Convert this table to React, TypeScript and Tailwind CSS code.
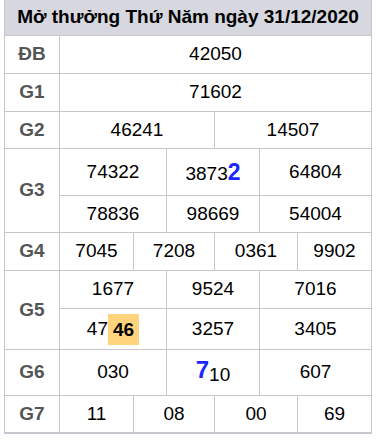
const B = 'border-[#c6c6ce]';

function Cell({ w, children, last }: { w: string; children: React.ReactNode; last?: boolean }) {
  return (
    <div className={`${w} flex items-center justify-center ${last ? '' : `border-r ${B}`}`}>
      {children}
    </div>
  );
}

function Row({
  label,
  rows,
}: {
  label: string;
  rows: { h: string; cells: { w: string; v: React.ReactNode }[] }[];
}) {
  return (
    <div className={`flex border-t ${B}`}>
      <div className={`w-[55px] shrink-0 flex items-center justify-center border-r ${B} font-bold text-[#555]`}>
        {label}
      </div>
      <div className="flex-1 flex flex-col">
        {rows.map((r, i) => (
          <div key={i} className={`${r.h} flex ${i > 0 ? `border-t ${B}` : ''}`}>
            {r.cells.map((c, j) => (
              <Cell key={j} w={c.w} last={j === r.cells.length - 1}>
                {c.v}
              </Cell>
            ))}
          </div>
        ))}
      </div>
    </div>
  );
}

const c3 = ['w-[107px]', 'w-[93px]', 'flex-1'];
const c4 = ['w-[74px]', 'w-[81px]', 'w-[83px]', 'flex-1'];
const c2 = ['w-[155px]', 'flex-1'];

const three = (h: string, vs: React.ReactNode[]) => ({ h, cells: vs.map((v, i) => ({ w: c3[i], v })) });
const four = (h: string, vs: React.ReactNode[]) => ({ h, cells: vs.map((v, i) => ({ w: c4[i], v })) });

export default function App() {
  return (
    <div className="w-[378px] h-[440px] bg-white pl-[4px]" style={{ fontFamily: '"Liberation Sans", Arial, sans-serif' }}>
      <div className={`w-[368px] border-x border-b-2 ${B} text-[19px] text-black`}>
        <div className="h-[35px] bg-[#d6d7df] flex items-center justify-center font-bold text-[19px]">
          Mở thưởng Thứ Năm ngày 31/12/2020
        </div>
        <Row label="ĐB" rows={[{ h: 'h-[37px]', cells: [{ w: 'flex-1', v: '42050' }] }]} />
        <Row label="G1" rows={[{ h: 'h-[37px]', cells: [{ w: 'flex-1', v: '71602' }] }]} />
        <Row
          label="G2"
          rows={[{ h: 'h-[36px]', cells: [{ w: c2[0], v: '46241' }, { w: c2[1], v: '14507' }] }]}
        />
        <Row
          label="G3"
          rows={[
            three('h-[46px]', [
              '74322',
              <span className="flex items-baseline">
                3873<span className="text-[23px] font-bold text-[#1a26ff]">2</span>
              </span>,
              '64804',
            ]),
            three('h-[37px]', ['78836', '98669', '54004']),
          ]}
        />
        <Row label="G4" rows={[four('h-[37px]', ['7045', '7208', '0361', '9902'])]} />
        <Row
          label="G5"
          rows={[
            three('h-[37px]', ['1677', '9524', '7016']),
            three('h-[41px]', [
              <span className="flex items-center">
                47
                <span className="bg-[#ffd47c] font-bold px-[5px] leading-[31px]">46</span>
              </span>,
              '3257',
              '3405',
            ]),
          ]}
        />
        <Row
          label="G6"
          rows={[
            three('h-[45px]', [
              '030',
              <span className="flex items-baseline">
                <span className="text-[24px] font-bold text-[#1a26ff] relative top-[-3px]">7</span>
                <span>10</span>
              </span>,
              '607',
            ]),
          ]}
        />
        <Row label="G7" rows={[four('h-[36px]', ['11', '08', '00', '69'])]} />
      </div>
    </div>
  );
}
